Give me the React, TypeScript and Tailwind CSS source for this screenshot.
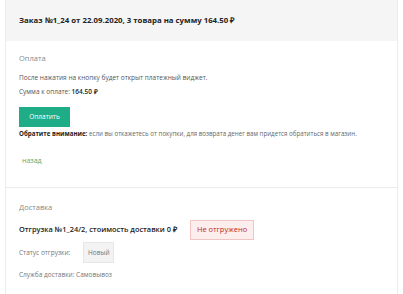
export default function App() {
  return (
    <div className="min-h-[294px] bg-white px-[5px] text-[#222] [font-family:'Open_Sans',sans-serif]">
      <div className="border-x border-b border-[#ececec]">
        {/* header */}
        <div className="flex h-[41px] items-center bg-[#f5f5f5] px-[13px]">
          <h1 className="text-[7.8px] font-bold">
            Заказ №1_24 от 22.09.2020, 3 товара на сумму 164.50 ₽
          </h1>
        </div>

        {/* payment */}
        <section className="border-b border-[#ececec] px-[13px] pb-[21px] pt-[11px]">
          <h2 className="text-[7.5px] leading-[12px] text-[#888]">Оплата</h2>
          <p className="mt-[9px] text-[6.5px] leading-[9px] text-[#555]">
            После нажатия на кнопку будет открыт платежный виджет.
          </p>
          <p className="mt-[5px] text-[6.5px] leading-[9px] text-[#555]">
            Сумма к оплате: <span className="font-semibold text-[#222]">164.50 ₽</span>
          </p>
          <button className="mt-[11px] flex h-[20px] w-[51px] items-center justify-center bg-[#1fad87] text-[6.5px] text-white">
            Оплатить
          </button>
          <p className="mt-[2px] text-[6.2px] leading-[9px] text-[#666]">
            <span className="font-bold text-[#222]">Обратите внимание:</span> если вы откажетесь от покупки, для возврата денег вам придется обратиться в магазин.
          </p>
          <a className="ml-[3px] mt-[18px] block text-[7px] leading-[10px] text-[#5aa86a]">назад</a>
        </section>

        {/* delivery */}
        <section className="px-[13px] pb-[15px] pt-[13px]">
          <h2 className="text-[7.5px] leading-[12px] text-[#888]">Доставка</h2>
          <div className="mt-[7px] flex items-center gap-[13px]">
            <span className="text-[7.4px] font-semibold">Отгрузка №1_24/2, стоимость доставки 0 ₽</span>
            <span className="flex h-[20px] items-center border border-[#f3c4c4] bg-[#fdeeee] px-[6px] text-[7.5px] text-[#c0292b]">
              Не отгружено
            </span>
          </div>
          <div className="mt-[2px] flex items-center gap-[13px]">
            <span className="text-[6.5px] text-[#777]">Статус отгрузки:</span>
            <span className="flex h-[21px] w-[31px] items-center justify-center border border-[#e6e6e6] bg-[#f3f3f3] text-[6.5px] text-[#777]">
              Новый
            </span>
          </div>
          <p className="mt-[7px] text-[6.5px] leading-[9px] text-[#777]">Служба доставки: Самовывоз</p>
        </section>
      </div>
    </div>
  );
}
